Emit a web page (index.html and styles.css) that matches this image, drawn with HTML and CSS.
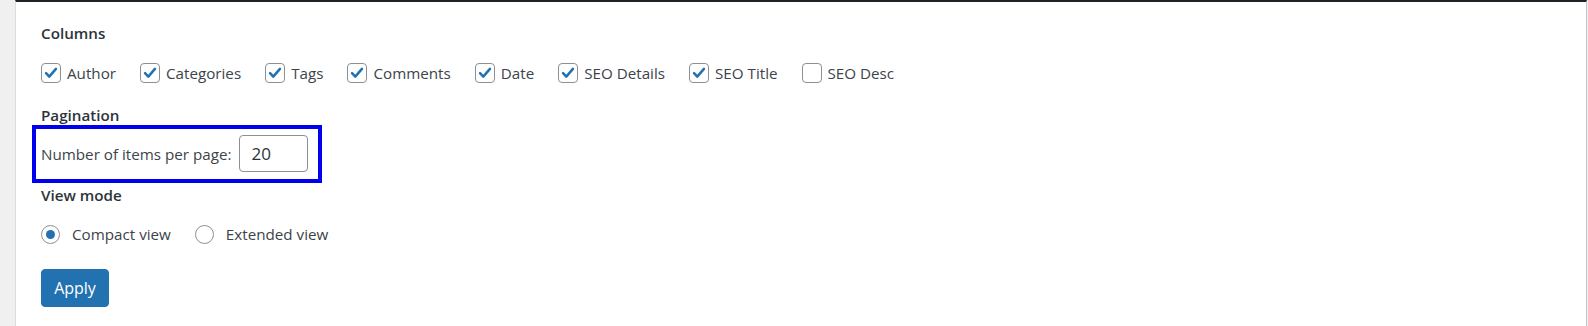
FILE: index.html
```html
<!DOCTYPE html>
<html lang="en">
<head>
  <meta charset="UTF-8">
  <meta name="viewport" content="width=device-width, initial-scale=1.0">
  <title>Screen Options</title>
  <link rel="stylesheet" href="styles.css">
</head>
<body>
  <div class="screen-options">
    <!-- Columns -->
    <div class="group-title">Columns</div>
    <div class="prefs">
      <label class="pref"><span class="check on"><svg viewBox="0 0 20 20"><path d="M4.5 10.2l3.6 3.8 7.4-8.6"/></svg></span>Author</label>
      <label class="pref"><span class="check on"><svg viewBox="0 0 20 20"><path d="M4.5 10.2l3.6 3.8 7.4-8.6"/></svg></span>Categories</label>
      <label class="pref"><span class="check on"><svg viewBox="0 0 20 20"><path d="M4.5 10.2l3.6 3.8 7.4-8.6"/></svg></span>Tags</label>
      <label class="pref"><span class="check on"><svg viewBox="0 0 20 20"><path d="M4.5 10.2l3.6 3.8 7.4-8.6"/></svg></span>Comments</label>
      <label class="pref"><span class="check on"><svg viewBox="0 0 20 20"><path d="M4.5 10.2l3.6 3.8 7.4-8.6"/></svg></span>Date</label>
      <label class="pref"><span class="check on"><svg viewBox="0 0 20 20"><path d="M4.5 10.2l3.6 3.8 7.4-8.6"/></svg></span>SEO Details</label>
      <label class="pref"><span class="check on"><svg viewBox="0 0 20 20"><path d="M4.5 10.2l3.6 3.8 7.4-8.6"/></svg></span>SEO Title</label>
      <label class="pref"><span class="check"></span>SEO Desc</label>
    </div>

    <!-- Pagination -->
    <div class="group-title pagination-title">Pagination</div>
    <div class="highlight">
      <label class="per-page">Number of items per page:</label>
      <span class="num-input">20</span>
    </div>

    <!-- View mode -->
    <div class="group-title viewmode-title">View mode</div>
    <div class="prefs radios">
      <label class="pref"><span class="radio on"></span>Compact view</label>
      <label class="pref"><span class="radio"></span>Extended view</label>
    </div>

    <button class="apply">Apply</button>
  </div>
</body>
</html>
```

FILE: styles.css
```css
html, body {
  margin: 0;
  height: 100%;
}

body {
  background: #f0f0f1;
  font-family: "Open Sans", "Noto Sans", sans-serif;
  font-size: 15.2px;
  color: #3c434a;
}

.screen-options {
  box-sizing: border-box;
  height: 100%;
  margin-left: 15px;
  margin-right: 1px;
  background: #fff;
  border-left: 1px solid #dcdcde;
  border-right: 1px solid #c3c4c7;
  border-top: 2px solid #1d2327;
  padding: 21px 0 0 25px;
}

.group-title {
  font-weight: 600;
  line-height: 20px;
  color: #2c3338;
}

.prefs {
  display: flex;
  margin-top: 20px;
  line-height: 20px;
}

.pref {
  display: flex;
  align-items: center;
  margin-right: 24px;
}

.check {
  box-sizing: border-box;
  width: 20px;
  height: 20px;
  border: 1px solid #8c8f94;
  border-radius: 4px;
  margin-right: 6px;
  display: flex;
  align-items: center;
  justify-content: center;
}

.check svg {
  width: 18px;
  height: 18px;
  fill: none;
  stroke: #2271b1;
  stroke-width: 2.8;
  stroke-linecap: round;
  stroke-linejoin: round;
}

.pagination-title {
  margin-top: 22px;
}

.highlight {
  display: inline-flex;
  align-items: center;
  border: 4px solid #0000ee;
  padding: 6px 10px 7px 5px;
  margin: 0 0 -11px -9px;
}

.per-page {
  margin-right: 8px;
}

.num-input {
  box-sizing: border-box;
  width: 69px;
  height: 37px;
  border: 1px solid #8c8f94;
  border-radius: 4px;
  padding-left: 11px;
  font-size: 17px;
  line-height: 35px;
  color: #2c3338;
}

.viewmode-title {
  margin-top: 13px;
}

.radios {
  margin-top: 19px;
}

.radio {
  box-sizing: border-box;
  width: 19px;
  height: 19px;
  border: 1px solid #8c8f94;
  border-radius: 50%;
  margin-right: 12px;
  display: flex;
  align-items: center;
  justify-content: center;
}

.radio.on::before {
  content: "";
  width: 9px;
  height: 9px;
  border-radius: 50%;
  background: #2271b1;
}

.apply {
  display: block;
  margin-top: 25px;
  width: 68px;
  height: 38px;
  border: 1px solid #2271b1;
  border-radius: 4px;
  background: #2271b1;
  color: #fff;
  font-family: inherit;
  font-size: 16px;
  padding: 0;
  cursor: pointer;
}
```
